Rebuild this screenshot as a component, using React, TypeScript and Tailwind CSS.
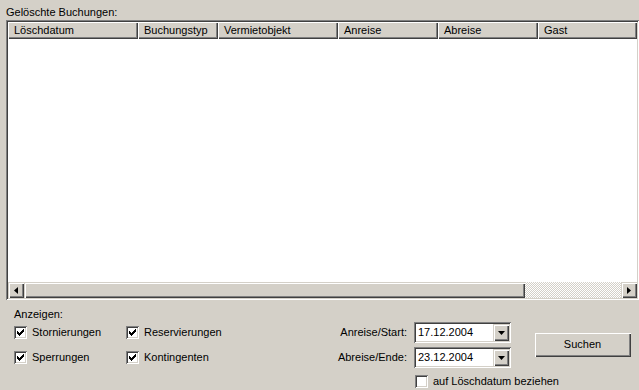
import React from "react";

const raised =
  "shadow-[inset_1px_1px_#d4d0c8,inset_2px_2px_#ffffff,inset_-1px_-1px_#404040,inset_-2px_-2px_#808080]";
const sunken =
  "shadow-[inset_1px_1px_#808080,inset_-1px_-1px_#ffffff,inset_2px_2px_#404040,inset_-2px_-2px_#d4d0c8]";

const columns = [
  { label: "Löschdatum", w: "w-[130px]" },
  { label: "Buchungstyp", w: "w-[80px]" },
  { label: "Vermietobjekt", w: "w-[120px]" },
  { label: "Anreise", w: "w-[100px]" },
  { label: "Abreise", w: "w-[100px]" },
  { label: "Gast", w: "flex-1" },
];

// classic 7x7 check glyph
const CheckMark = () => (
  <svg width="7" height="7" viewBox="0 0 7 7" className="block">
    <path
      d="M0 2h1v3H0zM1 3h1v3H1zM2 4h1v3H2zM3 3h1v3H3zM4 2h1v3H4zM5 1h1v3H5zM6 0h1v3H6z"
      fill="#000"
    />
  </svg>
);

const CheckBox = ({ label, checked }: { label: string; checked: boolean }) => (
  <div className="flex items-center gap-[5px] h-[13px]">
    <div className={`w-[13px] h-[13px] bg-white flex items-center justify-center shrink-0 ${sunken}`}>
      {checked ? <CheckMark /> : null}
    </div>
    <span className="leading-[13px] whitespace-nowrap">{label}</span>
  </div>
);

const ArrowDown = () => (
  <svg width="7" height="4" viewBox="0 0 7 4" className="block">
    <path d="M0 0h7L3.5 4z" fill="#000" />
  </svg>
);

const ComboBox = ({ value }: { value: string }) => (
  <div className={`w-[97px] h-[21px] bg-white p-[2px] flex ${sunken}`}>
    <div className="flex-1 pl-[2px] flex items-center leading-[13px]">{value}</div>
    <div className={`w-[16px] h-[17px] bg-[#d4d0c8] flex items-center justify-center ${raised}`}>
      <ArrowDown />
    </div>
  </div>
);

export default function App() {
  return (
    <div className="w-[639px] h-[390px] bg-[#d4d0c8] overflow-hidden text-[11px] text-black font-['Liberation_Sans',Arial,sans-serif]">
      <div className="pl-[6px] pt-[6px] h-[20px] leading-[13px]">Gelöschte Buchungen:</div>

      {/* list view */}
      <div className={`ml-[6px] w-[633px] h-[280px] p-[2px] flex flex-col ${sunken}`}>
        <div className="flex h-[17px] bg-[#d4d0c8]">
          {columns.map((c) => (
            <div
              key={c.label}
              className={`${c.w} h-full pl-[6px] flex items-center leading-[13px] shadow-[inset_1px_1px_#ffffff,inset_-1px_-1px_#404040,inset_-2px_-2px_#808080]`}
            >
              {c.label}
            </div>
          ))}
        </div>
        <div className="flex-1 bg-white" />
        <div className="flex h-[16px]">
          <div className={`w-[16px] h-[16px] bg-[#d4d0c8] flex items-center justify-center ${raised}`}>
            <svg width="4" height="7" viewBox="0 0 4 7" className="block">
              <path d="M4 0v7L0 3.5z" fill="#000" />
            </svg>
          </div>
          <div className={`w-[501px] h-[16px] bg-[#d4d0c8] ${raised}`} />
          <div className="flex-1 h-[16px] bg-[repeating-conic-gradient(#ffffff_0_25%,#d4d0c8_0_50%)] bg-[length:2px_2px]" />
          <div className={`w-[16px] h-[16px] bg-[#d4d0c8] flex items-center justify-center ${raised}`}>
            <svg width="4" height="7" viewBox="0 0 4 7" className="block">
              <path d="M0 0v7L4 3.5z" fill="#000" />
            </svg>
          </div>
        </div>
      </div>

      {/* filter area */}
      <div className="flex">
        <div className="pl-[14px] pt-[8px] w-[330px]">
          <div className="leading-[13px]">Anzeigen:</div>
          <div className="grid grid-cols-[112px_auto] gap-y-[12px] mt-[5px]">
            <CheckBox label="Stornierungen" checked />
            <CheckBox label="Reservierungen" checked />
            <CheckBox label="Sperrungen" checked />
            <CheckBox label="Kontingenten" checked />
          </div>
        </div>

        <div className="pt-[22px] grid grid-cols-[77px_97px] gap-x-[7px] items-center">
          <div className="text-right leading-[13px] whitespace-nowrap">Anreise/Start:</div>
          <ComboBox value="17.12.2004" />
          <div className="text-right leading-[13px] whitespace-nowrap mt-[4px]">Abreise/Ende:</div>
          <div className="mt-[4px]">
            <ComboBox value="23.12.2004" />
          </div>
          <div />
          <div className="mt-[7px] ml-[1px]">
            <CheckBox label="auf Löschdatum beziehen" checked={false} />
          </div>
        </div>

        <div className="ml-[23px] mt-[32px]">
          <button className={`w-[97px] h-[25px] bg-[#d4d0c8] flex items-center justify-center leading-[13px] ${raised}`}>
            Suchen
          </button>
        </div>
      </div>
    </div>
  );
}
